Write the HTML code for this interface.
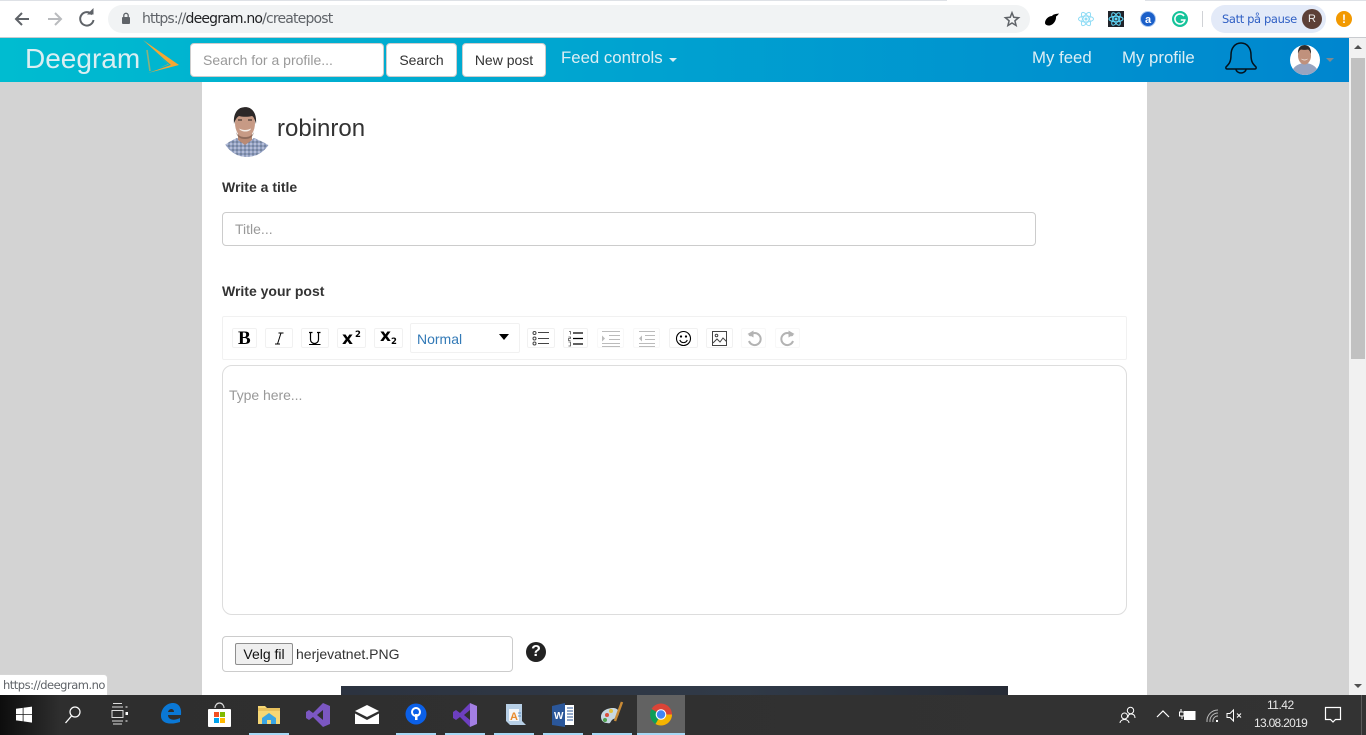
<!DOCTYPE html>
<html><head><meta charset="utf-8"><title>Deegram</title>
<style>
*{box-sizing:border-box}
html,body{margin:0;padding:0;width:1366px;height:735px;overflow:hidden;background:#d3d3d3;font-family:"Liberation Sans",sans-serif;color:#333}
.a{position:absolute}
svg{position:absolute;overflow:visible}
.t{position:absolute;white-space:nowrap}
.btn{position:absolute;background:#fff;border:1px solid #ccc;border-radius:4px;font-size:14px;color:#333;text-align:center;line-height:33px;height:34px;top:43px}
.tb{position:absolute;background:#fff;border:1px solid #f1f1f1;border-radius:2px;height:20px;top:328px}
.tb.d{border-color:#f8f8f8}
.ul{position:absolute;bottom:0;height:2px;background:#a6d8f5}
</style></head><body>

<!-- browser chrome -->
<div class="a" style="left:0;top:0;width:1366px;height:38px;background:#fff"></div>
<div class="a" style="left:0;top:0;width:947px;height:1px;background:#dee1e6"></div>
<div class="a" style="left:1145px;top:0;width:221px;height:1px;background:#dee1e6"></div>
<div class="a" style="left:0;top:37px;width:1366px;height:1px;background:#c9cbcf"></div>
<svg style="left:0;top:0" width="110" height="38">
<path d="M29 19H16M22 13l-6 6 6 6" fill="none" stroke="#5f6368" stroke-width="2"/>
<path d="M48 19H61M55 13l6 6-6 6" fill="none" stroke="#b9bbbe" stroke-width="2"/>
<path d="M92 14.500A6.700 6.700 0 1 0 93.500 20" fill="none" stroke="#5f6368" stroke-width="2"/>
<path d="M87 14.500h6.500V8z" fill="#5f6368"/>
</svg>
<div class="a" style="left:108px;top:5px;width:922px;height:28px;border-radius:14px;background:#f1f3f4"></div>
<svg style="left:120px;top:12px" width="12" height="14"><rect x="2" y="5" width="8" height="7" rx="1" fill="#5f6368"/><path d="M3.800 5V3.500a2.200 2.200 0 0 1 4.400 0V5" fill="none" stroke="#5f6368" stroke-width="1.300"/></svg>
<div class="t" style="left:142px;top:11px;font-size:14px;line-height:16px;font-family:'DejaVu Sans','Liberation Sans',sans-serif;letter-spacing:-.83px;color:#5f6368">https://<span style="color:#202124">deegram.no</span>/createpost</div>
<svg style="left:1003px;top:10px" width="18" height="18"><path d="M9 2.800l1.800 4.500 4.800.4-3.700 3.100 1.200 4.700L9 13l-4.100 2.500 1.200-4.700-3.700-3.100 4.800-.4z" fill="none" stroke="#5f6368" stroke-width="1.500"/></svg>

<svg style="left:1040px;top:8px" width="160" height="22">
<path d="M5 15c0-4 4-7 7-7 1-1.500 3-2 7-2.500-1 1.500-2 2.500-3 3 .5 4-3 9-7 9-2 0-4-1-4-2.500z" fill="#000"/>
<g fill="none" stroke="#8fdcf5" stroke-width="1"><ellipse cx="46" cy="11" rx="7.500" ry="3"/><ellipse cx="46" cy="11" rx="7.500" ry="3" transform="rotate(60 46 11)"/><ellipse cx="46" cy="11" rx="7.500" ry="3" transform="rotate(120 46 11)"/></g><circle cx="46" cy="11" r="1.500" fill="#8fdcf5"/>
<rect x="68" y="3" width="16" height="16" fill="#20232a"/>
<g fill="none" stroke="#61dafb" stroke-width="1"><ellipse cx="76" cy="11" rx="7" ry="2.800"/><ellipse cx="76" cy="11" rx="7" ry="2.800" transform="rotate(60 76 11)"/><ellipse cx="76" cy="11" rx="7" ry="2.800" transform="rotate(120 76 11)"/></g><circle cx="76" cy="11" r="1.500" fill="#61dafb"/>
<circle cx="108" cy="11" r="7.500" fill="#1a5fc9" stroke="#a8c6f0"/><text x="108" y="15" text-anchor="middle" font-family="Liberation Sans" font-size="11" font-weight="bold" fill="#fff">a</text>
<circle cx="140" cy="11" r="8" fill="#15c39a"/><path d="M144 8a5 5 0 1 0 .8 4h-4" fill="none" stroke="#fff" stroke-width="1.600"/>
</svg>
<div class="a" style="left:1202px;top:11px;width:1px;height:16px;background:#d0d2d6"></div>
<div class="a" style="left:1211px;top:5px;width:115px;height:28px;border-radius:14px;background:#e3eaf8"></div>
<div class="t" style="left:1222px;top:11px;font-size:11.500px;line-height:16px;font-family:'DejaVu Sans',sans-serif;letter-spacing:-.38px;color:#2f5fc4">Satt på pause</div>
<div class="a" style="left:1302px;top:9px;width:20px;height:20px;border-radius:50%;background:#5d4037;color:#eee;font-size:11px;line-height:20px;text-align:center">R</div>
<div class="a" style="left:1336px;top:11px;width:16px;height:16px;border-radius:50%;background:#f29900;color:#fff;font-size:12px;font-weight:bold;line-height:16px;text-align:center">!</div>

<!-- page content -->
<div class="a" style="left:202px;top:82px;width:945px;height:613px;background:#fff"></div>

<!-- navbar -->
<div class="a" style="left:0;top:38px;width:1349px;height:44px;background:linear-gradient(90deg,#00bcd0 0%,#0086cf 100%)"></div>
<div class="t" style="left:25px;top:42px;font-size:28px;line-height:34px;color:#dbeef2">Deegram</div>
<svg style="left:143px;top:40px" width="38" height="34">
<path d="M0 0L36 25 5 33 28 25 21 19z" fill="#f5a733"/>
<path d="M12 13L25 24 16 28 26 24.500z" fill="#f5a733" opacity=".7"/>
<path d="M4 10L7 31" fill="none" stroke="#8fb07a" stroke-width="1.600"/>
</svg>
<div class="a" style="left:190px;top:43px;width:194px;height:34px;background:#fff;border:1px solid #ccc;border-radius:4px"></div>
<div class="t" style="left:203px;top:52px;font-size:14px;line-height:16px;color:#999">Search for a profile...</div>
<div class="btn" style="left:386px;width:71px">Search</div>
<div class="btn" style="left:462px;width:84px">New post</div>
<div class="t" style="left:561px;top:49px;font-size:16.800px;line-height:18px;color:#dceef4">Feed controls</div>
<div class="a" style="left:669px;top:58px;border-top:4px solid #dceef4;border-left:4px solid transparent;border-right:4px solid transparent"></div>
<div class="t" style="left:1032px;top:49px;font-size:16.800px;line-height:18px;color:#dceef4">My feed</div>
<div class="t" style="left:1122px;top:49px;font-size:16.800px;line-height:18px;color:#dceef4">My profile</div>
<svg style="left:1224px;top:41px" width="34" height="34">
<path d="M2 26c3-3 5-5 5-12C7 7 11 2 17 2s10 5 10 12c0 7 2 9 5 12 .5 1 0 2-1 2H3c-1 0-1.500-1-1-2z" fill="none" stroke="#04121c" stroke-width="1.500"/>
<path d="M12 28a5 4 0 0 0 10 0" fill="none" stroke="#04121c" stroke-width="1.500"/>
</svg>
<svg style="left:1290px;top:45px" width="30" height="30">
<defs><clipPath id="c1"><circle cx="15" cy="15" r="15"/></clipPath></defs>
<g clip-path="url(#c1)"><rect width="30" height="30" fill="#fff"/>
<path d="M1 31c0-7 5-12 13-13h2c8 1 13 6 13 13z" fill="#98a4c0"/>
<ellipse cx="14.500" cy="10.500" rx="6.500" ry="9" fill="#c0917c"/>
<path d="M8 9c-.5-6 2.500-9 6.500-9s7 3 6.500 9c-1-3-2-4-3-4.500-2 .5-5 .5-7 0-1 .5-2.500 1.500-3 4.500z" fill="#2e2a2a"/>
<path d="M11 13.500c2 1.500 5 1.500 7 0-1 2.500-6 2.500-7 0z" fill="#f5eee9"/></g></svg>
<div class="a" style="left:1326px;top:58px;border-top:4px solid #7f8a90;border-left:4px solid transparent;border-right:4px solid transparent"></div>

<!-- scrollbar -->
<div class="a" style="left:1349px;top:38px;width:17px;height:657px;background:#f1f1f1"></div>
<div class="a" style="left:1351px;top:58px;width:14px;height:301px;background:#c1c1c1"></div>
<div class="a" style="left:1354px;top:45px;border-bottom:4px solid #505050;border-left:4px solid transparent;border-right:4px solid transparent"></div>
<div class="a" style="left:1354px;top:684px;border-top:4px solid #505050;border-left:4px solid transparent;border-right:4px solid transparent"></div>

<!-- profile -->
<svg style="left:222px;top:107px" width="50" height="50">
<defs><clipPath id="c2"><circle cx="25" cy="25" r="25"/></clipPath>
<pattern id="chk" width="4" height="4" patternUnits="userSpaceOnUse"><rect width="4" height="4" fill="#8f9dbf"/><rect width="2" height="2" fill="#b4bdd6"/><rect x="2" y="2" width="2" height="2" fill="#76859f"/></pattern></defs>
<g clip-path="url(#c2)"><rect width="50" height="50" fill="#fff"/>
<path d="M0 50V40c5-4 10-7 15-9l8 6 9-6c5 2 11 5 18 9v10z" fill="url(#chk)"/>
<path d="M16 26h14v7l-7 5-7-5z" fill="#b98a74"/>
<ellipse cx="23" cy="16" rx="10" ry="15" fill="#c79a85"/>
<path d="M12 17C11 6 16 0 23 0s12 6 11 17c-1-4-2-7-4-8-4 1-9 1-13 0-2 1-4 4-5 8z" fill="#2c2828"/>
<path d="M14 25c2 4 5 5 9 5s7-1 9-5c-1 5-4 7-9 7s-8-2-9-7z" fill="#7b5d50" opacity=".7"/>
<path d="M17 21.500c4 2 8 2 12 0-1 4-10 4-12 0z" fill="#f5eee9"/>
<path d="M16 13h4M26 13h4" stroke="#4a3a34" stroke-width="1.200"/>
</g></svg>
<div class="t" style="left:277px;top:115px;font-size:24px;line-height:28px;color:#333">robinron</div>
<div class="t" style="left:222px;top:179px;font-size:14px;line-height:16px;font-weight:bold">Write a title</div>
<div class="a" style="left:222px;top:212px;width:814px;height:34px;background:#fff;border:1px solid #ccc;border-radius:4px"></div>
<div class="t" style="left:235px;top:221px;font-size:14px;line-height:16px;color:#999">Title...</div>
<div class="t" style="left:222px;top:283px;font-size:14px;line-height:16px;font-weight:bold">Write your post</div>

<!-- toolbar -->
<div class="a" style="left:222px;top:316px;width:905px;height:44px;background:#fff;border:1px solid #f1f1f1;border-radius:2px"></div>
<div class="tb" style="left:232px;width:25px"></div>
<div class="t" style="left:238px;top:329px;font:bold 19px/19px 'Liberation Serif',serif;color:#000">B</div>
<div class="tb" style="left:265px;width:28px"></div>
<svg style="left:265px;top:328px" width="28" height="20" fill="none" stroke="#000"><path d="M13.500 5h5M10 16h5M16 5l-3.500 11" stroke-width="1"/></svg>
<div class="tb" style="left:301px;width:28px"></div>
<svg style="left:301px;top:328px" width="28" height="20" fill="none" stroke="#000"><path d="M8 4.500h3.500M16 4.500h3.500M9.500 4.500v7a4 4 0 0 0 8 0v-7" stroke-width="1.200"/><path d="M8 16.500h11.500" stroke-width="1"/></svg>
<div class="tb" style="left:337px;width:29px"></div>
<div class="t" style="left:342px;top:331px;font:bold 17px/17px 'DejaVu Sans',sans-serif;color:#000">x</div>
<div class="t" style="left:355px;top:331px;font:bold 8.500px/9px 'DejaVu Sans',sans-serif;color:#000">2</div>
<div class="tb" style="left:374px;width:29px"></div>
<div class="t" style="left:380px;top:328px;font:bold 17px/17px 'DejaVu Sans',sans-serif;color:#000">x</div>
<div class="t" style="left:391px;top:338px;font:bold 8.500px/9px 'DejaVu Sans',sans-serif;color:#000">2</div>
<div class="a" style="left:410px;top:323px;width:110px;height:30px;background:#fff;border:1px solid #f1f1f1;border-radius:2px"></div>
<div class="t" style="left:417px;top:330px;font-size:14px;line-height:18px;color:#337ab7">Normal</div>
<div class="a" style="left:499px;top:334px;border-top:6px solid #000;border-left:5px solid transparent;border-right:5px solid transparent"></div>

<div class="tb" style="left:527px;width:28px"></div>
<svg style="left:527px;top:328px" width="30" height="22" fill="none" stroke="#444" stroke-width="1"><circle cx="7.500" cy="5" r="1.500"/><circle cx="7.500" cy="10.500" r="1.500"/><circle cx="7.500" cy="15.500" r="1.500"/><path d="M11 4.500h11M11 10.500h11M11 15.500h11"/></svg>
<div class="tb" style="left:563px;width:25px"></div>
<svg style="left:563px;top:328px" width="26" height="22"><path d="M10 5h10M10 10.500h10M10 16h10" stroke="#000" stroke-width="1.300"/><path d="M6 3.500h1.500v3M5.500 9h2v1.500h-2v2h2M5.500 14h2v4h-2" fill="none" stroke="#555" stroke-width=".8"/></svg>
<div class="tb d" style="left:597px;width:27px"></div>
<svg style="left:597px;top:328px" width="28" height="22" stroke="#bbb" stroke-width="1"><path d="M5 3.500h18M12 7.500h11M12 11.500h11M5 15.500h18M5 18.500h18"/><path d="M5 7.500l3 3-3 3z" fill="#bbb" stroke="none"/></svg>
<div class="tb d" style="left:633px;width:27px"></div>
<svg style="left:633px;top:328px" width="28" height="22" stroke="#bbb" stroke-width="1"><path d="M6 3.500h16M12 7.500h10M12 11.500h10M6 15.500h16M6 18.500h16"/><path d="M9 7.500l-3 3 3 3z" fill="#bbb" stroke="none"/></svg>
<div class="tb" style="left:669px;width:29px"></div>
<svg style="left:669px;top:328px" width="30" height="22" fill="none" stroke="#000" stroke-width="1.100"><circle cx="14.500" cy="10.500" r="7"/><circle cx="12" cy="8.500" r=".6" fill="#000"/><circle cx="17" cy="8.500" r=".6" fill="#000"/><path d="M10.800 12c1.500 3.500 6 3.500 7.500 0"/></svg>
<div class="tb" style="left:706px;width:27px"></div>
<svg style="left:706px;top:328px" width="28" height="22" fill="none" stroke="#444" stroke-width="1"><rect x="6.500" y="3.500" width="14" height="14"/><circle cx="10.500" cy="7.500" r="1.300"/><path d="M7 15l4-4 3 3 3-4 3.500 3.500"/></svg>
<div class="tb d" style="left:741px;width:25px"></div>
<svg style="left:741px;top:328px" width="26" height="22" fill="none" stroke="#b3b3b3" stroke-width="2"><path d="M8.500 8a6 6 0 1 1-.5 5"/><path d="M12.500 2.500v7l-6-3.500z" fill="#b3b3b3" stroke="none"/></svg>
<div class="tb d" style="left:775px;width:25px"></div>
<svg style="left:775px;top:328px" width="26" height="22" fill="none" stroke="#b3b3b3" stroke-width="2"><path d="M17.500 8a6 6 0 1 0 .5 5"/><path d="M13.500 2.500v7l6-3.500z" fill="#b3b3b3" stroke="none"/></svg>

<!-- editor -->
<div class="a" style="left:222px;top:365px;width:905px;height:250px;background:#fff;border:1px solid #ddd;border-radius:10px"></div>
<div class="t" style="left:229px;top:387px;font-size:14px;line-height:16px;letter-spacing:-.05px;color:#999">Type here...</div>

<!-- file -->
<div class="a" style="left:222px;top:636px;width:291px;height:36px;background:#fff;border:1px solid #ccc;border-radius:4px"></div>
<div class="a" style="left:235px;top:643px;width:58px;height:22px;background:#efefef;border:1px solid #8f8f8f;border-radius:2px;font-size:14px;line-height:20px;text-align:center;color:#111">Velg fil</div>
<div class="t" style="left:296px;top:646px;font-size:14px;line-height:16px;color:#333">herjevatnet.PNG</div>
<div class="a" style="left:526px;top:642px;width:20px;height:20px;border-radius:50%;background:#222;color:#fff;font:bold 16px/20px 'Liberation Sans',sans-serif;text-align:center">?</div>
<div class="a" style="left:341px;top:686px;width:667px;height:9px;background:linear-gradient(90deg,#2c3340,#303a48 60%,#262b35)"></div>

<!-- status bubble -->
<div class="a" style="left:0;top:674px;width:108px;height:21px;background:#fff;border:1px solid #d6d6d6;border-left:0;border-bottom:0;border-radius:0 4px 0 0"></div>
<div class="t" style="left:3px;top:678px;font-size:11.500px;line-height:14px;font-family:'DejaVu Sans',sans-serif;letter-spacing:-.5px;color:#5f6368">https://deegram.no</div>

<!-- taskbar -->
<div class="a" style="left:0;top:695px;width:1366px;height:40px;background:linear-gradient(90deg,#0d0d0d 0,#2e2e2e 60px,#333 100%)"></div>
<div class="a" style="left:637px;top:695px;width:48px;height:40px;background:#626262"></div>
<svg style="left:0;top:695px" width="700" height="40">
<path d="M16 13.800l6.700-.9v6.300H16zM23.500 12.800L32 11.600v7.600h-8.500zM16 20h6.700v6.300L16 25.400zM23.500 20H32v7.600l-8.500-1.200z" fill="#fff"/>
<circle cx="75" cy="17" r="5" fill="none" stroke="#fff" stroke-width="1.200"/><path d="M71.500 21l-6 7" stroke="#fff" stroke-width="1.300"/>
<path d="M112 12h11M112 26h11M112 15.500h11v7h-11zM113 8.500h9M113 29h9" fill="none" stroke="#ddd" stroke-width="1"/><rect x="125.500" y="17" width="2.500" height="3" fill="#fff"/><path d="M125.500 12h2M125.500 26h2" stroke="#fff"/>
<path d="M161 21c0-8 6-13 12-13 5 0 9 4 8 12h-13c0 5 6 6 12 3v4c-9 3-19 2-19-6zm7-4h6c0-4-5-4-6 0z" fill="#0a78d6"/>
<path d="M215 13a4.500 5 0 0 1 9 0" fill="none" stroke="#ddd" stroke-width="1.200"/>
<rect x="208" y="14" width="23" height="18" rx="1" fill="#fff"/>
<rect x="214" y="17" width="5" height="5" fill="#f25022"/><rect x="220" y="17" width="5" height="5" fill="#7fba00"/><rect x="214" y="23" width="5" height="5" fill="#00a4ef"/><rect x="220" y="23" width="5" height="5" fill="#ffb900"/>
<path d="M258 11h7l2 2h13v16h-22z" fill="#f6d775"/><path d="M258 13h22v3h-22z" fill="#e8c15d"/><path d="M262 29v-6l7-5 7 5v6z" fill="#3aa5e4"/><rect x="267" y="25" width="4" height="4" fill="#f6d775"/>
<path d="M323 8l7 3v18l-7 3-10-10-4 3-3-2V17l3-2 4 3zM323 15l-6 5 6 5z" fill="#7b57c2"/>
<path d="M355 16l12-6 12 6-12 6zM355 18.500l12 6.500 12-6.500V29h-24z" fill="#fff"/>
<circle cx="416" cy="19" r="10.500" fill="#0b60e8"/><circle cx="416" cy="17" r="4" fill="none" stroke="#fff" stroke-width="2"/><rect x="415" y="19" width="2.500" height="6" fill="#fff"/>
<path d="M470 8l7 3v18l-7 3V25l0-10z" fill="#a37fe3"/><path d="M470 8v7l-6 5 6 5v7l-10-10-4 3-3-2V17l3-2 4 3z" fill="#6d3fc0"/>
<path d="M506 9h16v17l4 4h-16l-4-4z" fill="#b7cfe6"/><rect x="509" y="14" width="10" height="12" fill="#f3f6fa"/><text x="510" y="25" font-size="11" font-weight="bold" font-family="Liberation Sans" fill="#e88b2e">A</text><path d="M518 18h3M518 21h3" stroke="#5b8fc4"/>
<rect x="557" y="10" width="17" height="20" fill="#fff"/><path d="M552 11l13-3v24l-13-2z" fill="#2b579a"/><text x="554" y="24" font-size="10" font-weight="bold" font-family="Liberation Sans" fill="#fff">W</text><path d="M567 13h6M567 16h6M567 19h6M567 22h6M567 25h6" stroke="#2b579a"/>
<path d="M601 22c0-6 6-9 12-9 4 0 8 3 5 8-2 3-4 2-6 4s-1 4-5 3c-4 0-6-3-6-6z" fill="#c8d8e2"/><circle cx="607" cy="20" r="2" fill="#d94f3d"/><circle cx="611" cy="16" r="2" fill="#e3c13e"/><circle cx="605" cy="25" r="2" fill="#4fa14f"/><path d="M622 7l-7 19" stroke="#c98a35" stroke-width="2.500"/>
<circle cx="661" cy="19.500" r="11" fill="#db4437"/><path d="M661 19.500L651.500 14A11 11 0 0 0 661 30.500z" fill="#0f9d58"/><path d="M661 19.500L672 19.500A11 11 0 0 1 655.500 29z" fill="#f4b400"/><circle cx="661" cy="19.500" r="5.300" fill="#fff"/><circle cx="661" cy="19.500" r="4.200" fill="#4285f4"/>
</svg>
<div class="ul" style="left:249px;width:40px"></div>
<div class="ul" style="left:396px;width:40px"></div>
<div class="ul" style="left:445px;width:40px"></div>
<div class="ul" style="left:494px;width:40px"></div>
<div class="ul" style="left:543px;width:40px"></div>
<div class="ul" style="left:592px;width:40px"></div>
<div class="ul" style="left:637px;width:48px"></div>
<svg style="left:1100px;top:695px" width="266" height="40" fill="none" stroke="#fff">
<circle cx="30.500" cy="15.500" r="3.200"/><circle cx="24.500" cy="21" r="3"/><path d="M20 28c0-2 2-3.500 4.500-3.500S29 26 29 28M28 22.500c0-2 1-3.500 3-3.500 2.500 0 4 1.500 4 4"/>
<path d="M57 22l6-6 6 6" stroke-width="1.200"/>
<rect x="85" y="17" width="10" height="7" fill="#fff"/><rect x="84.500" y="16.500" width="10.500" height="8"/><path d="M79.500 17h4.500v4h-4.500zM81 14v3M82 21v3" stroke-width="1"/>
<path d="M107 27a11 11 0 0 1 11-12M110 27a8 8 0 0 1 8-9M113 27a5 5 0 0 1 5-6" stroke="#bbb"/><rect x="116" y="25" width="2" height="2" fill="#fff" stroke="none"/>
<path d="M127 18.500v4h3l3.500 3.500V15l-3.500 3.500z"/><path d="M137 18.500l4 4M141 18.500l-4 4"/>
<path d="M225.500 12.500h15v12h-5l-2.500 2.500-2.500-2.500h-5z" stroke-width="1.200"/>
</svg>
<div class="t" style="left:1267px;top:698px;font-size:12px;line-height:14px;letter-spacing:-.5px;color:#e8e8e8">11.42</div>
<div class="t" style="left:1254px;top:716px;font-size:12px;line-height:14px;letter-spacing:-.7px;color:#e8e8e8">13.08.2019</div>
<div class="a" style="left:1361px;top:695px;width:1px;height:40px;background:#5a5a5a"></div>
</body></html>
